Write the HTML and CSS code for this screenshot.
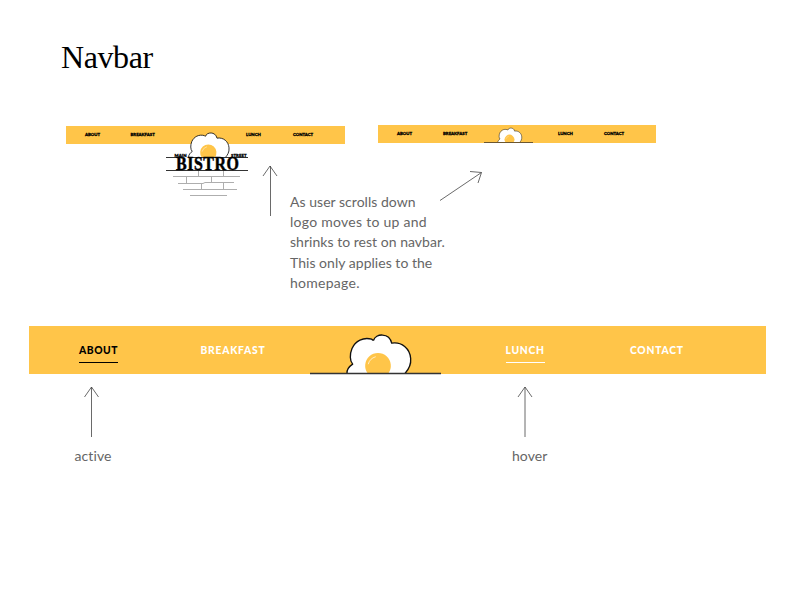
FILE: index.html
```html
<!DOCTYPE html>
<html lang="en">
<head>
<meta charset="utf-8">
<title>Navbar</title>
<link rel="stylesheet" href="styles.css">
</head>
<body>
<svg class="defs" aria-hidden="true">
  <symbol id="egg" viewBox="0 0 200 122" overflow="visible">
    <path class="white" d="M3 120C2 108 11 98 20 92C11 82 11 62 18 45C28 22 52 10 77 17Q80 20 83 20C88 0 130 -4 137 29C167 24 192 45 194 75C196 96 186 110 177 120"/>
    <path class="yolk" d="M65 120A38.500 38.500 0 1 1 127 120Z"/>
    <path class="shine" d="M67 91Q71 75 88 70"/>
  </symbol>
</svg>
<main class="sheet">
  <h1>Navbar</h1>

  <section class="previews">
    <nav class="bar mini with-logo">
      <a>ABOUT</a><a>BREAKFAST</a>
      <svg class="bistro" viewBox="0 0 83 70">
        <use href="#egg" x="23" y="6" width="42.300" height="25.800"/>
        <path class="rule" d="M1 31.500H14M77 31.500H83M24 31.500H82M1 44.500H83"/>
        <g class="brick"><path d="M8 50.500H75M13 57.500H38L40 56.500H69M18 63.500H72M25 69.500H62M33.500 45V50M58.500 45V50M21.500 51V57M46.500 51V56M36.500 58V63M58.500 57V63"/></g>
        <text class="tiny" x="9.500" y="30.600" textLength="12">MAIN</text>
        <text class="tiny" x="66" y="30.600" textLength="15.500">STREET</text>
        <text class="name" transform="translate(11 44) scale(.84 1)" x="0" y="0" textLength="75">BISTRO</text>
      </svg>
      <a>LUNCH</a><a>CONTACT</a>
    </nav>
    <nav class="bar mini docked">
      <a>ABOUT</a><a>BREAKFAST</a>
      <svg class="egg-small" viewBox="0 0 49 18">
        <use href="#egg" x="13.500" y="2.500" width="25" height="15.250"/>
        <path class="rule" d="M0 17.500H49"/>
      </svg>
      <a>LUNCH</a><a>CONTACT</a>
    </nav>
  </section>

  <section class="explain">
    <svg class="arrow-up" viewBox="0 0 16 52"><path d="M8.500 1V51M1 11L8 1L15 11"/></svg>
    <p>As user scrolls down<br><span class="loose">logo moves to up and</span><br>shrinks to rest on navbar.<br>This only applies to the<br><span class="loose">homepage.</span></p>
    <svg class="arrow-slant" viewBox="0 0 44 32"><path d="M0 30.500L41.500 2.500M30 1.500L41.500 2.500L38 13"/></svg>
  </section>

  <nav class="bar large">
    <a class="active">ABOUT</a><a>BREAKFAST</a>
    <svg class="egg-large" viewBox="0 0 131 48">
      <use href="#egg" x="36" y="7.500" width="66.667" height="40.667"/>
      <path class="rule" d="M0 47.500H131"/>
    </svg>
    <a class="hover">LUNCH</a><a>CONTACT</a>
  </nav>

  <section class="states">
    <figure class="state-active">
      <svg class="arrow-up" viewBox="0 0 16 52"><path d="M8.500 1V51M1.500 11L8.500 1L15.500 11"/></svg>
      <figcaption>active</figcaption>
    </figure>
    <figure class="state-hover">
      <svg class="arrow-up" viewBox="0 0 16 52"><path d="M8 1V51M1 11L8 1L15 11"/></svg>
      <figcaption>hover</figcaption>
    </figure>
  </section>
</main>
</body>
</html>
```

FILE: styles.css
```css
body { margin: 0; background: #fff; font-family: Lato, sans-serif; font-variant-ligatures: none; color: #666; }
.defs { position: absolute; width: 0; height: 0; }
.sheet { width: 792px; height: 612px; overflow: hidden; }
svg { display: block; overflow: visible; }

h1 {
  margin: 0;
  padding: 37px 0 0 61px;
  height: 87px;
  font: 400 32px/40px "Liberation Serif", serif;
  letter-spacing: -0.4px;
  color: #000;
}

.bar { display: grid; background: #ffc549; color: #000; align-items: start; }
.bar a { justify-self: start; white-space: nowrap; font-weight: 900; }

.previews { display: flex; align-items: flex-start; gap: 33.5px; padding-left: 66px; height: 42px; }
.mini { width: 278.5px; height: 18px; box-sizing: border-box; padding-left: 19px; font-size: 4.3px; line-height: 6px; -webkit-text-stroke: 0.3px #000; }
.mini a { margin-top: 6px; }
.with-logo { margin-top: 2px; grid-template-columns: 45.5px 34.5px 81px 47px 1fr; }
.docked { margin-top: 0.5px; width: 278px; grid-template-columns: 46px 41px 74px 46px 1fr; }

.white { fill: #fff; stroke: #111; stroke-width: 4; stroke-linejoin: round; }
.mini .white { stroke-width: 5; }
.yolk { fill: #ffc549; }
.shine { fill: none; stroke: #fff; stroke-width: 2; stroke-linecap: round; }
.rule { fill: none; stroke: #333; stroke-width: 1; }
.brick { fill: none; stroke: #777; stroke-width: 0.6; }
.bistro { width: 83px; height: 70px; -webkit-text-stroke: 0; }
.tiny { font: 900 4.3px Lato, sans-serif; fill: #000; stroke: #000; stroke-width: 0.3; }
.name { font: 700 19px "Liberation Serif", serif; fill: #000; stroke: #000; stroke-width: 0.5; }
.egg-small { width: 49px; height: 18px; }
.egg-small .rule { stroke: #6b5630; }

.explain { display: flex; height: 162px; padding-left: 262px; }
.explain p { margin: 26px 0 0 12px; width: 150px; font-size: 14px; line-height: 20.2px; letter-spacing: 0.03px; white-space: nowrap; }
.loose { letter-spacing: 0.27px; }
.arrow-up, .arrow-slant { fill: none; stroke: #444; stroke-width: 0.8; }
.arrow-up { width: 16px; height: 52px; flex: none; }
.explain .arrow-up { margin-top: -1px; }
.explain .arrow-slant { width: 44px; height: 32px; margin-top: 4px; }

.large { margin: -2.5px 0 0 28.5px; width: 737.5px; height: 48px; box-sizing: border-box; padding-left: 50.5px; grid-template-columns: 121.5px 109.5px 195.5px 124.5px 1fr; color: #fff; font-size: 10.3px; line-height: 14px; letter-spacing: 0.75px; }
.large a { margin-top: 17px; height: 19px; border-bottom: 1px solid transparent; }
.large .active { color: #000; border-color: #000; letter-spacing: 0.55px; }
.large .hover { border-color: #fff; letter-spacing: 0.7px; }
.egg-large { width: 131px; height: 48px; }
.egg-large .rule { stroke-width: 1.3; }

.states { display: flex; justify-content: space-between; width: 473px; margin: 12px 0 0 74.5px; }
figure { margin: 0; font-size: 14px; line-height: 20px; letter-spacing: 0.1px; }
figcaption { margin-top: 8px; }
.state-active .arrow-up { margin-left: 8.5px; }
.state-hover .arrow-up { margin-left: 5px; }
```
